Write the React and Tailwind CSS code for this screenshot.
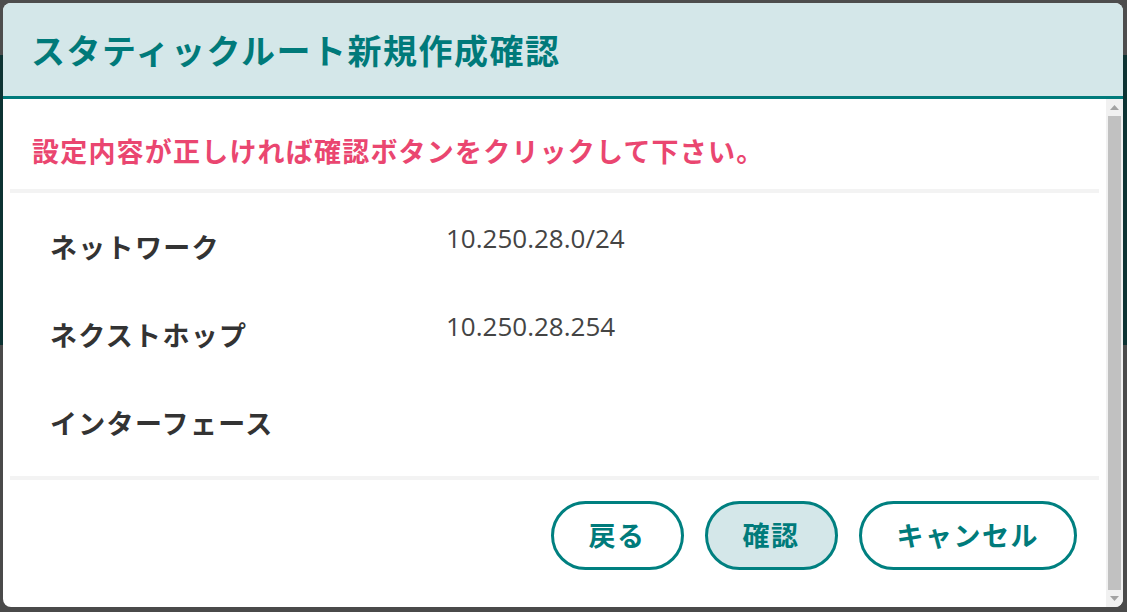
import React from "react";

const jp = { fontFamily: '"Noto Sans CJK JP", "Noto Sans", sans-serif' };
const num = { fontFamily: '"Open Sans", "Noto Sans CJK JP", sans-serif' };

function ScrollArrow({ up }) {
  return (
    <div className="h-[17px] flex items-center justify-center">
      <svg width="9" height="5" viewBox="0 0 9 5">
        <polygon points={up ? "0,5 4.5,0 9,5" : "0,0 4.5,5 9,0"} fill="#a3a3a3" />
      </svg>
    </div>
  );
}

export default function App() {
  const rows = [
    { label: "ネットワーク", value: "10.250.28.0/24" },
    { label: "ネクストホップ", value: "10.250.28.254" },
    { label: "インターフェース", value: "" },
  ];

  const buttons = [
    { text: "戻る", active: false },
    { text: "確認", active: true },
    { text: "キャンセル", active: false },
  ];

  return (
    <div className="relative w-[1127px] h-[612px] overflow-hidden bg-[#4a4a4a]" style={jp}>
      {/* page behind the overlay */}
      <div className="flex flex-col h-full">
        <div className="h-[55px] bg-[#4d4d4d]" />
        <div className="h-[290px] bg-[#0d3333]" />
        <div className="flex-1 bg-[#4a4a4a]" />
      </div>

      {/* dialog */}
      <div className="absolute left-[3px] top-[3px] w-[1120px] h-[604px] rounded-[8px] bg-white overflow-hidden flex flex-col">
        <div className="h-[96px] shrink-0 bg-[#d4e7e9] border-b-[3px] border-[#007b7b] flex items-center pl-[28px]">
          <h1 className="text-[34px] tracking-[1.5px] font-bold text-[#007a7a] leading-none">
            スタティックルート新規作成確認
          </h1>
        </div>

        <div className="flex-1 flex min-h-0">
          <div className="flex-1 flex flex-col">
            <p className="pl-[29px] pt-[33px] leading-[38px] text-[27px] tracking-[1.2px] font-bold text-[#ea4670]">
              設定内容が正しければ確認ボタンをクリックして下さい。
            </p>
            <div className="mt-[19px] mx-[7px] h-[4px] bg-[#f3f3f3]" />

            <div className="pt-[10px]">
              {rows.map((row) => (
                <div key={row.label} className="flex h-[88px]">
                  <div className="ml-[47px] w-[396px] mt-[26px] leading-[36px] text-[27px] tracking-[1.3px] font-bold text-[#333]">
                    {row.label}
                  </div>
                  <div className="mt-[17px] leading-[36px] text-[26px] text-[#444]" style={num}>
                    {row.value}
                  </div>
                </div>
              ))}
            </div>

            <div className="mt-[9px] mx-[7px] h-[4px] bg-[#f3f3f3]" />

            <div className="mt-[21px] pr-[29px] flex justify-end gap-[21px]">
              {buttons.map((b) => (
                <button
                  key={b.text}
                  className={
                    "h-[69px] min-w-[132px] px-[35px] rounded-full border-[3px] border-[#008080] text-[27px] tracking-[1.5px] font-bold text-[#007b7b] " +
                    (b.active ? "bg-[#d4e7e9]" : "bg-white")
                  }
                >
                  {b.text}
                </button>
              ))}
            </div>
          </div>

          {/* scrollbar */}
          <div className="w-[17px] bg-[#f1f1f1] flex flex-col">
            <ScrollArrow up />
            <div className="flex-1 mx-[2px] bg-[#c1c1c1]" />
            <ScrollArrow />
          </div>
        </div>
      </div>
    </div>
  );
}
